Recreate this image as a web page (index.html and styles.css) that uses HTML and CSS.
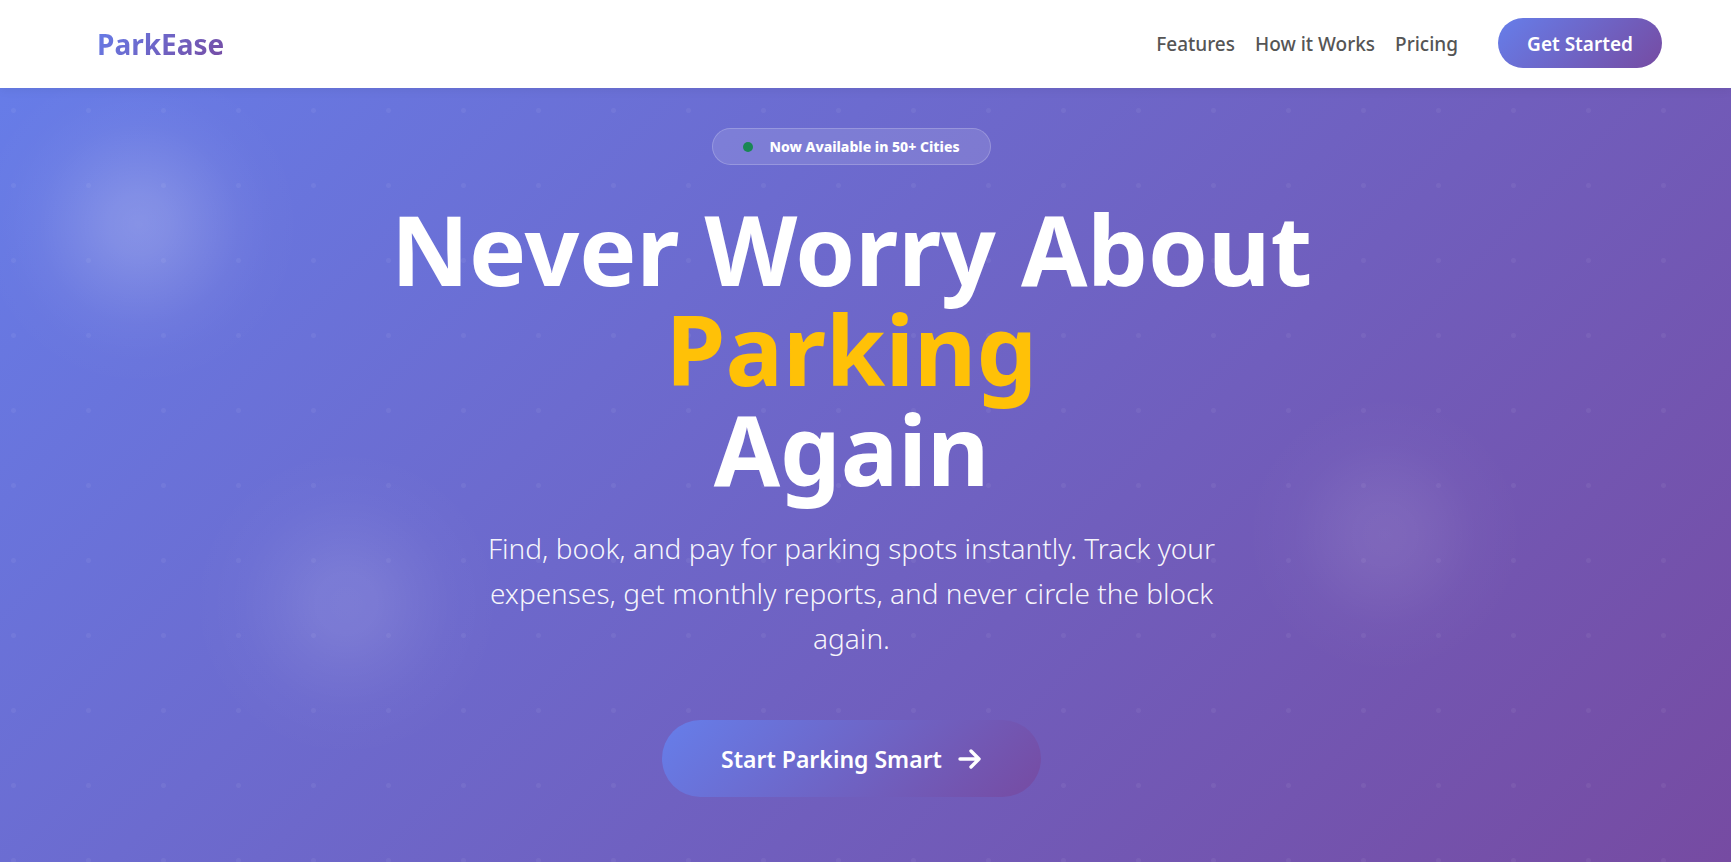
FILE: index.html
```html
<!DOCTYPE html>
<html lang="en">
<head>
    <meta charset="UTF-8">
    <meta name="viewport" content="width=device-width, initial-scale=1.0">
    <title>ParkEase</title>
    <link rel="stylesheet" href="styles.css">
</head>
<body>
    <!-- Navbar -->
    <header class="navbar">
        <a class="brand" href="#home">ParkEase</a>
        <nav class="nav-links">
            <a href="#features">Features</a>
            <a href="#how-it-works">How it Works</a>
            <a href="#pricing">Pricing</a>
            <button class="btn nav-btn" type="button">Get Started</button>
        </nav>
    </header>

    <!-- Hero -->
    <main class="hero" id="home">
        <div class="badge"><span class="badge-dot"></span>Now Available in 50+ Cities</div>
        <h1>Never Worry About <span class="highlight">Parking</span> Again</h1>
        <p class="lead">Find, book, and pay for parking spots instantly. Track your expenses, get monthly reports, and never circle the block again.</p>
        <button class="btn hero-btn" type="button">
            Start Parking Smart
            <svg class="arrow" viewBox="0 0 24 20" aria-hidden="true">
                <path d="M2 10H21M13 2L21 10L13 18"/>
            </svg>
        </button>
    </main>
</body>
</html>
```

FILE: styles.css
```css
* {
    box-sizing: border-box;
    margin: 0;
    padding: 0;
}

body {
    font-family: "Segoe UI", "Noto Sans", "Open Sans", sans-serif;
    min-height: 100vh;
    display: flex;
    flex-direction: column;
}

.btn {
    border: none;
    color: #fff;
    font-family: inherit;
    font-weight: 600;
    cursor: pointer;
    background: linear-gradient(135deg, #667eea 0%, #764ba2 100%);
}

/* Navbar */
.navbar {
    display: flex;
    justify-content: space-between;
    align-items: center;
    height: 88px;
    padding: 0 69px 0 97px;
    background: #fff;
    box-shadow: 0 2px 10px rgba(0, 0, 0, 0.06);
    position: sticky;
    top: 0;
    z-index: 1;
}

.brand {
    font-size: 28px;
    font-weight: 700;
    text-decoration: none;
    color: transparent;
    background: linear-gradient(135deg, #667eea 0%, #764ba2 100%);
    background-clip: text;
    -webkit-background-clip: text;
}

.nav-links {
    display: flex;
    align-items: center;
    gap: 20px;
    padding-bottom: 2px;
}

.nav-links a {
    padding-top: 2px;
    color: #555;
    font-size: 19px;
    font-weight: 500;
    text-decoration: none;
}

.nav-btn {
    width: 164px;
    height: 50px;
    margin-left: 20px;
    padding-top: 2px;
    border-radius: 25px;
    font-size: 19px;
}

/* Hero, the background runs up behind the navbar */
.hero {
    flex: 1;
    display: flex;
    flex-direction: column;
    align-items: center;
    margin-top: -88px;
    padding: 128px 28px 64px 0;
    text-align: center;
    color: #fff;
    background:
        radial-gradient(circle, rgba(255, 255, 255, 0.05) 2px, transparent 3px) -24px -2px / 75px 75px,
        radial-gradient(circle at 8% 26%, rgba(255, 255, 255, 0.2), rgba(255, 255, 255, 0.17) 30px, rgba(255, 255, 255, 0.1) 65px, rgba(255, 255, 255, 0.04) 100px, rgba(255, 255, 255, 0.01) 130px, transparent 165px),
        radial-gradient(circle at 20% 70%, rgba(255, 255, 255, 0.11), rgba(255, 255, 255, 0.1) 30px, rgba(255, 255, 255, 0.06) 65px, rgba(255, 255, 255, 0.02) 105px, transparent 155px),
        radial-gradient(circle at 80% 62%, rgba(255, 255, 255, 0.09), rgba(255, 255, 255, 0.08) 30px, rgba(255, 255, 255, 0.05) 60px, rgba(255, 255, 255, 0.02) 90px, transparent 140px),
        linear-gradient(135deg, #667eea 0%, #764ba2 100%);
}

.badge {
    display: flex;
    align-items: center;
    gap: 16px;
    height: 37px;
    padding: 0 30px;
    border: 1px solid rgba(255, 255, 255, 0.2);
    border-radius: 19px;
    background: rgba(255, 255, 255, 0.12);
    font-size: 14px;
    font-weight: 800;
}

.badge-dot {
    width: 10px;
    height: 10px;
    border-radius: 50%;
    background: #198754;
}

h1 {
    max-width: 1000px;
    margin-top: 34px;
    font-size: 96px;
    font-weight: 700;
    line-height: 100px;
}

.highlight {
    display: block;
    color: #ffc107;
}

.lead {
    max-width: 750px;
    margin-top: 27px;
    font-size: 28px;
    font-weight: 300;
    line-height: 45px;
    color: rgba(255, 255, 255, 0.95);
}

.hero-btn {
    display: flex;
    align-items: center;
    gap: 16px;
    height: 77px;
    margin-top: 59px;
    padding: 0 59px;
    border-radius: 39px;
    font-size: 23px;
}

.arrow {
    width: 24px;
    height: 20px;
    fill: none;
    stroke: #fff;
    stroke-width: 3.4;
    stroke-linecap: round;
    stroke-linejoin: round;
}
```
